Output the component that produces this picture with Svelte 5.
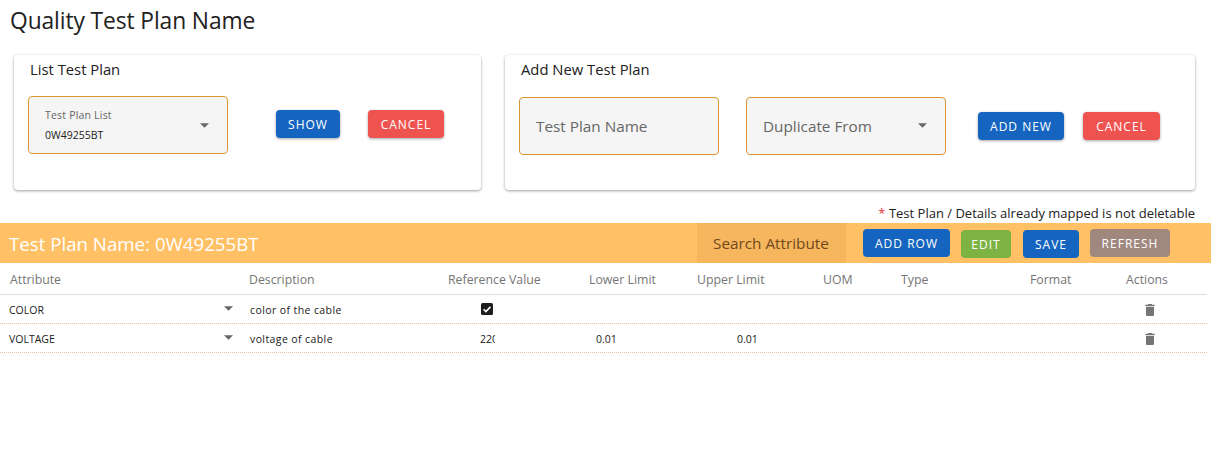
<script>
	const rows = [
		{ attribute: 'COLOR', description: 'color of the cable', checked: true, lower: '', upper: '' },
		{ attribute: 'VOLTAGE', description: 'voltage of cable', value: '220', lower: '0.01', upper: '0.01' }
	];
	const headers = ['Attribute', 'Description', 'Reference Value', 'Lower Limit', 'Upper Limit', 'UOM', 'Type', 'Format', 'Actions'];
</script>

{#snippet arrow()}
	<svg class="arrow" width="9" height="5" viewBox="0 0 10 5"><path d="M0 0h10L5 5z" /></svg>
{/snippet}

<div class="page">
	<h1>Quality Test Plan Name</h1>

	<div class="cards">
		<section class="card list">
			<h2>List Test Plan</h2>
			<div class="controls">
				<div class="field select-small">
					<div>
						<div class="small-label">Test Plan List</div>
						<div class="small-value">0W49255BT</div>
					</div>
					{@render arrow()}
				</div>
				<button class="btn blue show">Show</button>
				<button class="btn red cancel-a">Cancel</button>
			</div>
		</section>

		<section class="card add">
			<h2>Add New Test Plan</h2>
			<div class="controls">
				<div class="field"><span class="placeholder">Test Plan Name</span></div>
				<div class="field dup">
					<span class="placeholder">Duplicate From</span>
					{@render arrow()}
				</div>
				<button class="btn blue add-new">Add New</button>
				<button class="btn red cancel-b">Cancel</button>
			</div>
		</section>
	</div>

	<p class="note"><span>*</span> Test Plan / Details already mapped is not deletable</p>

	<div class="toolbar">
		<div class="plan-name">Test Plan Name: 0W49255BT</div>
		<div class="search">Search Attribute</div>
		<button class="btn blue add-row">Add Row</button>
		<button class="btn green edit">Edit</button>
		<button class="btn blue save">Save</button>
		<button class="btn brown refresh">Refresh</button>
	</div>

	<div class="table">
		<div class="row head">
			{#each headers as h}
				<div>{h}</div>
			{/each}
		</div>
		{#each rows as r}
			<div class="row body">
				<div class="attr">{r.attribute}{@render arrow()}</div>
				<div class="desc">{r.description}</div>
				<div class="ref">
					{#if r.checked}
						<svg class="check" width="12" height="12" viewBox="0 0 12 12">
							<rect width="12" height="12" rx="1.5" fill="#1d1d1d" />
							<path d="M2.6 6.2l2.3 2.3 4.5-4.6" fill="none" stroke="#fff" stroke-width="1.6" />
						</svg>
					{:else}
						<span class="clip">{r.value}</span>
					{/if}
				</div>
				<div class="lower">{r.lower}</div>
				<div class="upper">{r.upper}</div>
				<div></div>
				<div></div>
				<div></div>
				<div class="actions">
					<svg width="16" height="16" viewBox="0 0 24 24"><path fill="#757575" d="M6 19c0 1.1.9 2 2 2h8c1.1 0 2-.9 2-2V7H6v12zM19 4h-3.5l-1-1h-5l-1 1H5v2h14V4z" /></svg>
				</div>
			</div>
		{/each}
	</div>
</div>

<style>
	:global(body) {
		margin: 0;
		background: #fff;
		font-family: 'Open Sans', 'Liberation Sans', sans-serif;
		color: #212121;
	}

	.page {
		width: 1211px;
		height: 467px;
		overflow: hidden;
	}

	h1 {
		margin: 0;
		padding: 5px 0 0 10px;
		height: 55px;
		box-sizing: border-box;
		font-size: 22.8px;
		line-height: 32px;
		font-weight: 400;
		letter-spacing: -0.1px;
	}

	.cards {
		display: flex;
		gap: 24px;
		padding: 0 16px 0 14px;
		height: 135px;
	}

	.card {
		background: #fff;
		border-radius: 4px;
		box-shadow: 0 1px 3px rgba(0, 0, 0, 0.38), 0 0 1px rgba(0, 0, 0, 0.04);
		box-sizing: border-box;
	}

	.list {
		width: 467px;
		padding: 0 14px;
	}

	.add {
		width: 690px;
		padding: 0 14px;
	}

	h2 {
		margin: 0;
		padding: 3px 0 0 2px;
		height: 42px;
		box-sizing: border-box;
		font-size: 14.8px;
		line-height: 22px;
		font-weight: 400;
	}

	.controls {
		display: flex;
		align-items: center;
	}

	.field {
		box-sizing: border-box;
		width: 200px;
		height: 58px;
		padding: 0 16px;
		display: flex;
		align-items: center;
		justify-content: space-between;
		background: #f5f5f5;
		border: 1px solid #dc9630;
		border-radius: 4px;
	}

	.select-small {
		padding-right: 18px;
		margin-top: -1px;
	}

	.small-label {
		font-size: 10.5px;
		line-height: 14px;
		color: #666;
		margin-bottom: 6px;
		letter-spacing: 0.2px;
	}

	.small-value {
		font-size: 10.5px;
		line-height: 14px;
		color: #212121;
	}

	.placeholder {
		font-size: 15.3px;
		color: #666;
	}

	.arrow {
		fill: #666;
		flex: none;
	}

	.dup {
		margin-left: 27px;
		padding-right: 18px;
	}

	.dup .arrow {
		margin-bottom: 2px;
	}

	.btn {
		border: 0;
		border-radius: 4px;
		color: #fff;
		font-family: inherit;
		font-size: 12px;
		letter-spacing: 1px;
		text-transform: uppercase;
		height: 28px;
		padding: 0;
		box-shadow: 0 1px 3px rgba(0, 0, 0, 0.35);
	}

	.blue {
		background: #1565c0;
	}

	.red {
		background: #ef5350;
	}

	.green {
		background: #7cb342;
	}

	.brown {
		background: #a1887f;
	}

	.show {
		width: 64px;
		margin: 0 0 3px 48px;
	}

	.cancel-a {
		width: 76px;
		margin: 0 0 3px 28px;
	}

	.add-new {
		width: 86px;
		margin-left: 32px;
	}

	.cancel-b {
		width: 77px;
		margin-left: 19px;
	}

	.note {
		margin: 0;
		height: 33px;
		padding: 15px 16px 0 0;
		box-sizing: border-box;
		text-align: right;
		font-size: 13px;
		line-height: 17px;
	}

	.note span {
		color: #e53935;
	}

	.toolbar {
		display: flex;
		align-items: center;
		height: 40px;
		background: #ffc066;
	}

	.plan-name {
		width: 697px;
		box-sizing: border-box;
		padding-left: 9px;
		color: #fff;
		font-size: 18.7px;
	}

	.search {
		width: 149px;
		height: 40px;
		box-sizing: border-box;
		padding-left: 16px;
		line-height: 40px;
		background: #f5b65e;
		color: #71471a;
		font-size: 15.3px;
	}

	.toolbar .btn {
		box-shadow: none;
	}

	.add-row {
		width: 87px;
		margin-left: 17px;
	}

	.edit {
		width: 50px;
		margin: 2px 0 0 11px;
	}

	.save {
		width: 56px;
		margin: 2px 0 0 12px;
	}

	.refresh {
		width: 80px;
		margin-left: 11px;
	}

	.table {
		width: 1207px;
	}

	.row {
		display: grid;
		grid-template-columns: 249px 199px 141px 108px 126px 78px 129px 96px 81px;
		box-sizing: border-box;
	}

	.head {
		height: 32px;
		padding-top: 1px;
		align-items: center;
		border-bottom: 1px solid #ddd;
		font-size: 12.3px;
		color: #757575;
	}

	.head div:first-child {
		padding-left: 10px;
	}

	.body {
		height: 29px;
		padding-top: 1px;
		align-items: center;
		border-bottom: 1px dotted #e2c89f;
		font-size: 10.5px;
		color: #212121;
	}

	.attr {
		display: flex;
		align-items: center;
		justify-content: space-between;
		padding: 0 16px 0 9px;
	}

	.attr .arrow {
		margin-bottom: 2px;
	}

	.desc {
		padding-left: 1px;
		letter-spacing: 0.4px;
	}

	.ref {
		padding-left: 33px;
		display: flex;
		align-items: center;
	}

	.check {
		margin-bottom: 2px;
	}

	.clip {
		display: block;
		width: 15px;
		margin-left: -1px;
		overflow: hidden;
	}

	.lower {
		padding-left: 7px;
	}

	.upper {
		padding-left: 40px;
	}

	.actions {
		padding-left: 16px;
		display: flex;
		align-items: center;
	}
</style>
